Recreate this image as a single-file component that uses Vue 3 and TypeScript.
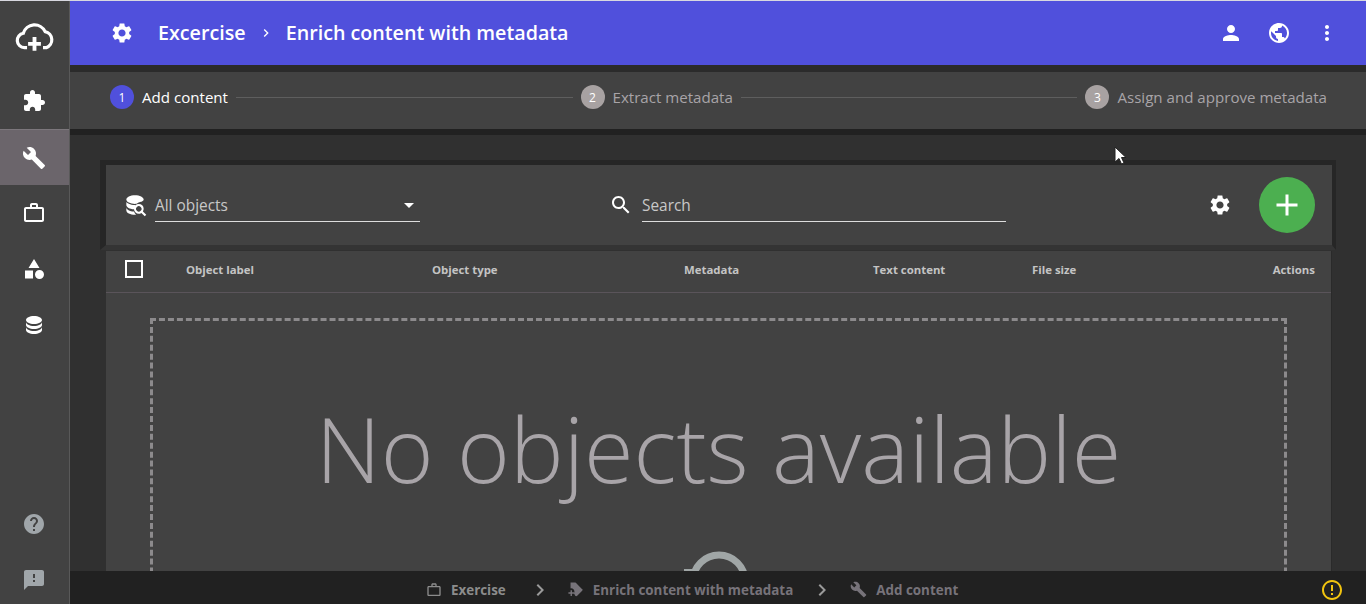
<template>
  <div class="app">
    <aside class="sidebar">
      <div class="logo">
        <svg viewBox="0 0 38 30" width="41" height="32" fill="none" stroke="#fff" stroke-width="3">
          <path d="M12 25H9.500a6.800 6.800 0 0 1-1-13.500A11 11 0 0 1 29 10a7.800 7.800 0 0 1 1 15h-3" />
          <path d="M19 15v13M13 21.500h12" stroke-width="3.600" />
        </svg>
      </div>
      <a v-for="item in navItems" :key="item.name" class="nav-item" :class="{ active: item.active }">
        <svg viewBox="0 0 24 24" width="24" height="24" fill="#fff"><path :d="item.path" /></svg>
      </a>
      <div class="nav-spacer"></div>
      <a v-for="item in bottomItems" :key="item.name" class="nav-item dim">
        <svg viewBox="0 0 24 24" width="24" height="24" fill="#a0a6aa"><path :d="item.path" /></svg>
      </a>
    </aside>

    <main class="main">
      <header class="topbar">
        <svg class="topbar-gear" viewBox="0 0 24 24" width="24" height="24" fill="#fff"><path :d="icons.gear" /></svg>
        <span class="crumb">Excercise</span>
        <svg class="crumb-sep" viewBox="0 0 24 24" width="16" height="16" fill="#fff"><path :d="icons.chevron" /></svg>
        <span class="crumb">Enrich content with metadata</span>
        <div class="topbar-actions">
          <svg viewBox="0 0 24 24" width="24" height="24" fill="#fff"><path :d="icons.person" /></svg>
          <svg viewBox="0 0 24 24" width="24" height="24" fill="#fff"><path :d="icons.globe" /></svg>
          <svg viewBox="0 0 24 24" width="24" height="24" fill="#fff"><path :d="icons.more" /></svg>
        </div>
      </header>

      <section class="stepper">
        <template v-for="(step, i) in steps" :key="step">
          <div v-if="i > 0" class="step-line"></div>
          <div class="step" :class="{ current: i === 0 }">
            <span class="step-num">{{ i + 1 }}</span>
            <span class="step-label">{{ step }}</span>
          </div>
        </template>
      </section>

      <section class="content">
        <div class="toolbar">
          <svg class="db-icon" viewBox="0 0 24 24" width="26" height="26" fill="#fff"><path :d="icons.dbSearch" /></svg>
          <div class="select">
            <span>All objects</span>
            <span class="caret"></span>
          </div>
          <svg class="search-icon" viewBox="0 0 24 24" width="24" height="24" fill="#fff"><path :d="icons.search" /></svg>
          <div class="search">Search</div>
          <svg class="tool-gear" viewBox="0 0 24 24" width="24" height="24" fill="#fff"><path :d="icons.gear" /></svg>
          <button type="button" class="fab" aria-label="Add">
            <svg viewBox="0 0 24 24" width="36" height="36" fill="#fff"><path d="M19 13h-6v6h-2v-6H5v-2h6V5h2v6h6z" /></svg>
          </button>
        </div>

        <div class="table">
          <div class="table-head">
            <span class="checkbox"></span>
            <span>Object label</span>
            <span>Object type</span>
            <span>Metadata</span>
            <span>Text content</span>
            <span>File size</span>
            <span class="right">Actions</span>
          </div>
          <div class="empty">
            <div class="empty-text">No objects available</div>
            <svg class="empty-icon" viewBox="0 0 80 60" width="80" height="60" fill="none" stroke="#a0a6a6" stroke-width="7">
              <path d="M14 30a26 26 0 0 1 52 0" />
              <path d="M5 20h12" stroke-width="4" />
            </svg>
          </div>
        </div>
      </section>
    </main>

    <footer class="statusbar">
      <svg viewBox="0 0 24 24" width="16" height="16" fill="#8c8c8c"><path :d="icons.work" /></svg>
      <span class="status-first">Exercise</span>
      <svg class="status-sep first" viewBox="0 0 24 24" width="24" height="24" fill="#9a9a9a"><path :d="icons.chevron" /></svg>
      <svg viewBox="0 0 24 24" width="17" height="17" fill="#77737a"><path :d="icons.tag" /></svg>
      <span>Enrich content with metadata</span>
      <svg class="status-sep" viewBox="0 0 24 24" width="24" height="24" fill="#9a9a9a"><path :d="icons.chevron" /></svg>
      <svg viewBox="0 0 24 24" width="17" height="17" fill="#77737a"><path :d="icons.wrench" /></svg>
      <span>Add content</span>
      <svg class="status-warn" viewBox="0 0 24 24" width="24" height="24" fill="#f2c40f"><path :d="icons.warn" /></svg>
    </footer>

    <svg class="cursor" viewBox="0 0 14 20" width="14" height="20">
      <path d="M1 1v15l4-3.500 2.500 5.500 2.500-1-2.500-5.500H12z" fill="#fff" stroke="#222" stroke-width="1" />
    </svg>
  </div>
</template>

<script setup lang="ts">
const icons = {
  gear: 'M19.14 12.94c.04-.3.06-.61.06-.94 0-.32-.02-.64-.07-.94l2.03-1.58c.18-.14.23-.41.12-.61l-1.92-3.32c-.12-.22-.37-.29-.59-.22l-2.39.96c-.5-.38-1.03-.7-1.62-.94l-.36-2.54c-.04-.24-.24-.41-.48-.41h-3.84c-.24 0-.43.17-.47.41l-.36 2.54c-.59.24-1.13.57-1.62.94l-2.39-.96c-.22-.08-.47 0-.59.22L2.74 8.87c-.12.21-.08.47.12.61l2.03 1.58c-.05.3-.09.63-.09.94s.02.64.07.94l-2.03 1.58c-.18.14-.23.41-.12.61l1.92 3.32c.12.22.37.29.59.22l2.39-.96c.5.38 1.03.7 1.62.94l.36 2.54c.05.24.24.41.48.41h3.84c.24 0 .44-.17.47-.41l.36-2.54c.59-.24 1.13-.56 1.62-.94l2.39.96c.22.08.47 0 .59-.22l1.92-3.32c.12-.22.07-.47-.12-.61l-2.01-1.58zM12 15.6c-1.98 0-3.6-1.62-3.6-3.6s1.62-3.6 3.6-3.6 3.6 1.62 3.6 3.6-1.62 3.6-3.6 3.6z',
  puzzle: 'M20.5 11H19V7c0-1.1-.9-2-2-2h-4V3.500C13 2.120 11.880 1 10.500 1S8 2.120 8 3.500V5H4c-1.100 0-1.990.9-1.990 2v3.800H3.500c1.490 0 2.700 1.210 2.700 2.700s-1.210 2.700-2.700 2.700H2V20c0 1.100.9 2 2 2h3.800v-1.500c0-1.490 1.210-2.700 2.700-2.700 1.490 0 2.700 1.210 2.700 2.700V22H17c1.100 0 2-.9 2-2v-4h1.500c1.380 0 2.500-1.120 2.500-2.500S21.880 11 20.500 11z',
  wrench: 'M22.700 19l-9.100-9.100c.9-2.300.4-5-1.500-6.900-2-2-5-2.400-7.400-1.300L9 6 6 9 1.600 4.700C.4 7.100.9 10.100 2.900 12.100c1.900 1.900 4.600 2.400 6.900 1.500l9.100 9.100c.4.4 1 .4 1.400 0l2.300-2.300c.5-.4.5-1.100.1-1.400z',
  work: 'M14 6V4h-4v2h4zM4 8v11h16V8H4zm16-2c1.110 0 2 .89 2 2v11c0 1.110-.89 2-2 2H4c-1.110 0-2-.89-2-2l.01-11c0-1.110.88-2 1.990-2h4V4c0-1.110.89-2 2-2h4c1.110 0 2 .89 2 2v2h4z',
  shapes: 'M12 2l5.500 9h-11zM3 13.500h8v8H3zM17.500 13a4.500 4.500 0 1 1 0 9 4.500 4.500 0 0 1 0-9z',
  database: 'M12 3C7.580 3 4 4.790 4 7s3.580 4 8 4 8-1.790 8-4-3.580-4-8-4zM4 9v3c0 2.210 3.580 4 8 4s8-1.790 8-4V9c0 2.210-3.580 4-8 4s-8-1.790-8-4zm0 5v3c0 2.210 3.580 4 8 4s8-1.790 8-4v-3c0 2.210-3.580 4-8 4s-8-1.790-8-4z',
  help: 'M12 2C6.480 2 2 6.480 2 12s4.480 10 10 10 10-4.480 10-10S17.520 2 12 2zm1 17h-2v-2h2v2zm2.070-7.750l-.9.92C13.450 12.900 13 13.500 13 15h-2v-.5c0-1.100.45-2.100 1.170-2.830l1.240-1.260c.37-.36.59-.86.59-1.410 0-1.100-.9-2-2-2s-2 .9-2 2H8c0-2.210 1.790-4 4-4s4 1.790 4 4c0 .88-.36 1.680-.93 2.250z',
  feedback: 'M20 2H4c-1.100 0-1.990.9-1.990 2L2 22l4-4h14c1.100 0 2-.9 2-2V4c0-1.100-.9-2-2-2zm-7 12h-2v-2h2v2zm0-4h-2V6h2v4z',
  person: 'M12 12c2.210 0 4-1.790 4-4s-1.790-4-4-4-4 1.790-4 4 1.790 4 4 4zm0 2c-2.670 0-8 1.340-8 4v2h16v-2c0-2.660-5.330-4-8-4z',
  globe: 'M12 2C6.480 2 2 6.480 2 12s4.480 10 10 10 10-4.480 10-10S17.520 2 12 2zm-1 17.930c-3.950-.49-7-3.850-7-7.930 0-.62.08-1.210.21-1.790L9 15v1c0 1.100.9 2 2 2v1.930zm6.900-2.540c-.26-.81-1-1.390-1.900-1.390h-1v-3c0-.55-.45-1-1-1H8v-2h2c.55 0 1-.45 1-1V7h2c1.100 0 2-.9 2-2v-.41c2.930 1.190 5 4.060 5 7.410 0 2.080-.8 3.970-2.100 5.390z',
  more: 'M12 8c1.100 0 2-.9 2-2s-.9-2-2-2-2 .9-2 2 .9 2 2 2zm0 2c-1.100 0-2 .9-2 2s.9 2 2 2 2-.9 2-2-.9-2-2-2zm0 6c-1.100 0-2 .9-2 2s.9 2 2 2 2-.9 2-2-.9-2-2-2z',
  search: 'M15.500 14h-.79l-.28-.27C15.410 12.590 16 11.110 16 9.500 16 5.910 13.090 3 9.500 3S3 5.910 3 9.500 5.910 16 9.500 16c1.610 0 3.090-.59 4.230-1.570l.27.28v.79l5 4.990L20.490 19l-4.990-5zm-6 0C7.010 14 5 11.990 5 9.500S7.010 5 9.500 5 14 7.010 14 9.500 11.990 14 9.500 14z',
  chevron: 'M10 6L8.590 7.410 13.170 12l-4.580 4.590L10 18l6-6z',
  warn: 'M11 15h2v2h-2zm0-8h2v6h-2zm.99-5C6.470 2 2 6.480 2 12s4.470 10 9.990 10C17.520 22 22 17.520 22 12S17.520 2 11.990 2zM12 20c-4.420 0-8-3.580-8-8s3.580-8 8-8 8 3.580 8 8-3.580 8-8 8z',
  tag: 'M21.410 11.580l-9-9C12.050 2.220 11.550 2 11 2H5v8.500c.3-.1.600-.1 1-.1 2.500 0 4.500 2 4.500 4.500 0 .9-.2 1.700-.7 2.400l1.790 3.620c.36.36.86.58 1.410.58.55 0 1.050-.22 1.410-.59l7-7c.37-.36.59-.86.59-1.410 0-.55-.23-1.060-.59-1.420zM5 13v3H2v2h3v3h2v-3h3v-2H7v-3z',
  dbSearch: 'M18.680 12.320a4.490 4.490 0 0 0-6.360.01 4.490 4.490 0 0 0 0 6.360 4.510 4.510 0 0 0 5.570.63L21 22.390 22.390 21l-3.090-3.110c1.130-1.770.87-4.090-.62-5.570zm-1.410 4.970a2.500 2.500 0 0 1-3.540 0 2.500 2.500 0 0 1 .01-3.540 2.500 2.500 0 0 1 3.530 0 2.500 2.500 0 0 1 0 3.540zM12 3C7.580 3 4 4.790 4 7s3.580 4 8 4c.5 0 1-.03 1.500-.08a6.500 6.500 0 0 1 4-1.880L18 9c1-.5 2-1.200 2-2 0-2.210-3.580-4-8-4zM4 9v3c0 2.050 3.080 3.740 7.050 3.970.02-1.300.4-2.600 1.150-3.970H12c-4.420 0-8-1.790-8-3zm0 5v3c0 2.210 3.580 4 8 4 .3 0 .7 0 1-.05a6.500 6.500 0 0 1-1.900-2.960C7.100 17.800 4 16.200 4 14z',
}

const navItems = [
  { name: 'extensions', path: icons.puzzle, active: false },
  { name: 'tools', path: icons.wrench, active: true },
  { name: 'work', path: icons.work, active: false },
  { name: 'shapes', path: icons.shapes, active: false },
  { name: 'data', path: icons.database, active: false },
]

const bottomItems = [
  { name: 'help', path: icons.help },
  { name: 'feedback', path: icons.feedback },
]

const steps = ['Add content', 'Extract metadata', 'Assign and approve metadata']
</script>

<style>
html,
body {
  margin: 0;
  background: #303030;
}
</style>

<style scoped>
.app {
  position: relative;
  display: flex;
  width: 1366px;
  height: 604px;
  overflow: hidden;
  box-sizing: border-box;
  border-top: 1px solid #d8d8e0;
  background: #303030;
  font-family: 'Open Sans', 'Noto Sans', sans-serif;
}

.sidebar {
  display: flex;
  flex-direction: column;
  align-items: stretch;
  flex: none;
  width: 70px;
  box-sizing: border-box;
  background: #424242;
  border-right: 1px solid #595959;
}

.logo {
  display: flex;
  align-items: center;
  justify-content: center;
  height: 72px;
  padding-right: 1px;
}

.nav-item {
  display: flex;
  align-items: center;
  justify-content: center;
  height: 56px;
  padding-right: 1px;
}

.nav-item.active {
  background: #6b656b;
  border-top: 1px solid #7c777c;
  box-sizing: border-box;
}

.nav-spacer {
  flex: 1;
}

.nav-item.dim {
  position: relative;
  top: 4px;
}

.main {
  display: flex;
  flex-direction: column;
  flex: 1;
  min-width: 0;
}

.topbar {
  display: flex;
  align-items: center;
  flex: none;
  height: 64px;
  padding: 0 27px 0 40px;
  background: #5050dc;
  color: #fff;
}

.topbar-gear {
  margin-right: 24px;
}

.crumb {
  padding-bottom: 2px;
  font-size: 19.7px;
  font-weight: 600;
}

.crumb-sep {
  margin: 0 12px;
}

.topbar-actions {
  display: flex;
  gap: 24px;
  margin-left: auto;
}

.stepper {
  display: flex;
  align-items: center;
  flex: none;
  box-sizing: border-box;
  height: 57px;
  margin-top: 7px;
  padding: 0 39px 7px 40px;
  background: #424242;
  box-shadow: 0 -7px 0 #2b2b2b;
}

.step {
  display: flex;
  align-items: center;
  gap: 8px;
  color: #a8a4a8;
  font-size: 15.1px;
}

.step.current {
  color: #fff;
}

.step-num {
  display: flex;
  align-items: center;
  justify-content: center;
  width: 24px;
  height: 24px;
  border-radius: 50%;
  background: #a8a2a2;
  color: #fff;
  font-size: 12px;
}

.current .step-num {
  background: #5050dc;
}

.step-line {
  flex: 1;
  height: 1px;
  margin: 0 8px;
  background: #5e5e5e;
}

.content {
  flex: 1;
  min-height: 0;
  padding-top: 25px;
  padding-left: 30px;
  padding-right: 30px;
  border-top: 6px solid #212121;
  overflow: hidden;
}

.toolbar {
  display: flex;
  align-items: center;
  height: 80px;
  padding: 0 17px 0 16px;
  background: #424242;
  border: solid #262626;
  border-width: 5px 4px 5px 6px;
  border-bottom-color: #343434;
}

.db-icon {
  margin-right: 7px;
}

.select {
  display: flex;
  align-items: center;
  justify-content: space-between;
  box-sizing: border-box;
  width: 265px;
  height: 32px;
  padding: 0 6px 0 0;
  margin-top: 1px;
  border-bottom: 1px solid #ddd;
  color: #c8c8c8;
  font-size: 15.4px;
}

.caret {
  width: 0;
  height: 0;
  border: 5px solid transparent;
  border-top-color: #fff;
  border-bottom: 0;
}

.search-icon {
  margin-left: 189px;
  margin-right: 9px;
}

.search {
  display: flex;
  align-items: center;
  box-sizing: border-box;
  width: 364px;
  height: 32px;
  margin-top: 1px;
  border-bottom: 1px solid #ddd;
  color: #c8c8c8;
  font-size: 15.4px;
}

.tool-gear {
  margin-left: 202px;
}

.fab {
  display: flex;
  align-items: center;
  justify-content: center;
  width: 56px;
  height: 56px;
  margin-left: 27px;
  padding: 0;
  border: 0;
  border-radius: 50%;
  background: #4caf50;
}

.table {
  margin: 1px 4px 0 6px;
  background: #424242;
  border-right: 1px solid #2a2a2a;
  height: 330px;
  overflow: hidden;
}

.table-head {
  display: grid;
  grid-template-columns: 61px 246px 252px 189px 159px 1fr 100px;
  align-items: center;
  box-sizing: border-box;
  height: 42px;
  padding: 0 16px 5px 19px;
  border-bottom: 1px solid #5a545a;
  color: #c4c4c4;
  font-size: 11.4px;
  font-weight: 700;
}

.right {
  text-align: right;
}

.checkbox {
  box-sizing: border-box;
  width: 18px;
  height: 18px;
  border: 2px solid #fff;
}

.empty {
  box-sizing: border-box;
  height: 300px;
  margin: 25px 44px 0;
  border: 3px dashed #8c8a8c;
  overflow: hidden;
}

.empty-text {
  margin-top: 72px;
  text-align: center;
  color: #a8a4a8;
  font-size: 90.2px;
  font-weight: 300;
  line-height: 110px;
  white-space: nowrap;
}

.empty-icon {
  display: block;
  margin: 48px auto 0;
}

.statusbar {
  position: absolute;
  left: 70px;
  right: 0;
  bottom: 0;
  display: flex;
  align-items: center;
  height: 33px;
  padding: 4px 22px 0 356px;
  box-sizing: border-box;
  background: #212121;
  color: #77737a;
  font-size: 13.4px;
  font-weight: 700;
}

.statusbar span {
  margin-left: 9px;
}

.statusbar .status-first {
  color: #8c8c8c;
}

.status-sep {
  margin: 0 16px 0 17px;
}

.status-sep.first {
  margin: 0 15px 0 22px;
}

.status-warn {
  margin-left: auto;
}

.cursor {
  position: absolute;
  left: 1114px;
  top: 145px;
}
</style>
